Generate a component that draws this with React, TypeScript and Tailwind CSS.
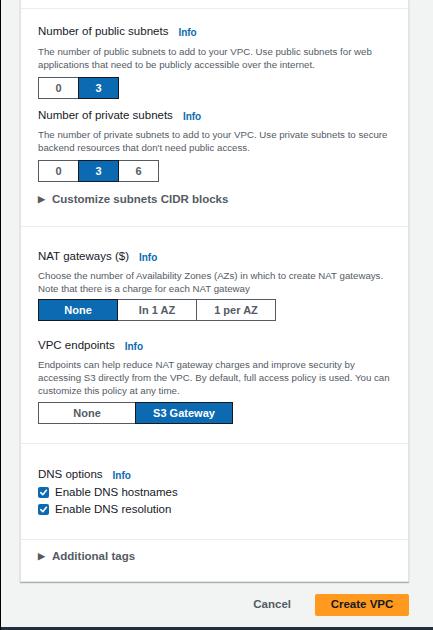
import React from 'react';

type SegProps = {
  options: string[];
  selected: number;
  width: string;
};

const Segmented: React.FC<SegProps> = ({ options, selected, width }) => (
  <div className="flex">
    {options.map((opt, i) => (
      <div
        key={opt}
        className={`${width} h-[22px] flex items-center justify-center text-[11px] font-bold border ${
          i > 0 ? '-ml-px' : ''
        } ${
          i === selected
            ? 'bg-[#0b6ab1] text-white border-[#16191f] relative'
            : 'bg-white text-[#545b64] border-[#545b64]'
        }`}
      >
        {opt}
      </div>
    ))}
  </div>
);

const Label: React.FC<{ text: string }> = ({ text }) => (
  <div className="flex items-center h-4 text-[11.5px] text-[#16191f]">
    <span>{text}</span>
    <span className="ml-[10px] text-[10px] font-bold text-[#0b6ab1]">Info</span>
  </div>
);

const Desc: React.FC<{ children: React.ReactNode }> = ({ children }) => (
  <p className="text-[9.7px] leading-[13px] text-[#545b64] whitespace-nowrap">{children}</p>
);

const Expander: React.FC<{ text: string }> = ({ text }) => (
  <div className="flex items-center h-4 text-[11.5px] font-bold text-[#545b64]">
    <span className="text-[9px] text-[#545b64] w-[14px]">▶</span>
    <span>{text}</span>
  </div>
);

const Check: React.FC<{ text: string }> = ({ text }) => (
  <div className="flex items-center h-[17px] text-[11.5px] text-[#16191f]">
    <span className="w-[11px] h-[11px] rounded-[2px] bg-[#0b6ab1] flex items-center justify-center mr-[6px]">
      <svg width="9" height="9" viewBox="0 0 10 10" fill="none">
        <path d="M2 5.2 L4.2 7.4 L8.2 2.6" stroke="white" strokeWidth="1.8" strokeLinecap="round" strokeLinejoin="round" />
      </svg>
    </span>
    <span>{text}</span>
  </div>
);

export default function App() {
  return (
    <div
      className="w-[433px] h-[630px] bg-[#f2f3f3] border-l border-black flex flex-col overflow-hidden"
      style={{ fontFamily: '"Liberation Sans", Arial, sans-serif' }}
    >
      <div className="ml-[19px] w-[389px] bg-white border-x border-b border-[#e1e4e4] shadow-[0_1px_1px_rgba(0,28,36,0.3)]">
        <div className="h-2" />
        <div className="border-t border-[#eaeded] px-[17px] pt-[15px] pb-[18px]">
          <Label text="Number of public subnets" />
          <div className="mt-[5px]">
            <Desc>
              The number of public subnets to add to your VPC. Use public subnets for web
              <br />
              applications that need to be publicly accessible over the internet.
            </Desc>
          </div>
          <div className="mt-[6px]">
            <Segmented options={['0', '3']} selected={1} width="w-[41px]" />
          </div>
          <div className="mt-[9px]">
            <Label text="Number of private subnets" />
          </div>
          <div className="mt-[4px]">
            <Desc>
              The number of private subnets to add to your VPC. Use private subnets to secure
              <br />
              backend resources that don't need public access.
            </Desc>
          </div>
          <div className="mt-[6px]">
            <Segmented options={['0', '3', '6']} selected={1} width="w-[41px]" />
          </div>
          <div className="mt-[10px]">
            <Expander text="Customize subnets CIDR blocks" />
          </div>
        </div>

        <div className="border-t border-[#eaeded] px-[17px] pt-[22px] pb-[19px]">
          <Label text="NAT gateways ($)" />
          <div className="mt-[4px]">
            <Desc>
              Choose the number of Availability Zones (AZs) in which to create NAT gateways.
              <br />
              Note that there is a charge for each NAT gateway
            </Desc>
          </div>
          <div className="mt-[4px]">
            <Segmented options={['None', 'In 1 AZ', '1 per AZ']} selected={0} width="w-[80px]" />
          </div>
          <div className="mt-[17px]">
            <Label text="VPC endpoints" />
          </div>
          <div className="mt-[4px]">
            <Desc>
              Endpoints can help reduce NAT gateway charges and improve security by
              <br />
              accessing S3 directly from the VPC. By default, full access policy is used. You can
              <br />
              customize this policy at any time.
            </Desc>
          </div>
          <div className="mt-[5px]">
            <Segmented options={['None', 'S3 Gateway']} selected={1} width="w-[98px]" />
          </div>
        </div>

        <div className="border-t border-[#eaeded] px-[17px] pt-[23px] pb-[21px]">
          <Label text="DNS options" />
          <div className="mt-[1px]">
            <Check text="Enable DNS hostnames" />
            <Check text="Enable DNS resolution" />
          </div>
        </div>

        <div className="border-t border-[#eaeded] px-[17px] pt-[9px] pb-[16px]">
          <Expander text="Additional tags" />
        </div>
      </div>

      <div className="flex justify-end items-center mt-[12px] w-[408px] gap-[12px]">
        <button className="h-[22px] px-[12px] text-[11.5px] font-bold text-[#545b64]">Cancel</button>
        <button className="h-[22px] w-[94px] bg-[#ff9a1e] rounded-[2px] text-[11.5px] font-bold text-[#16191f]">
          Create VPC
        </button>
      </div>

      <div className="flex-1" />
      <div className="h-[3px] bg-[#232f3e]" />
    </div>
  );
}
